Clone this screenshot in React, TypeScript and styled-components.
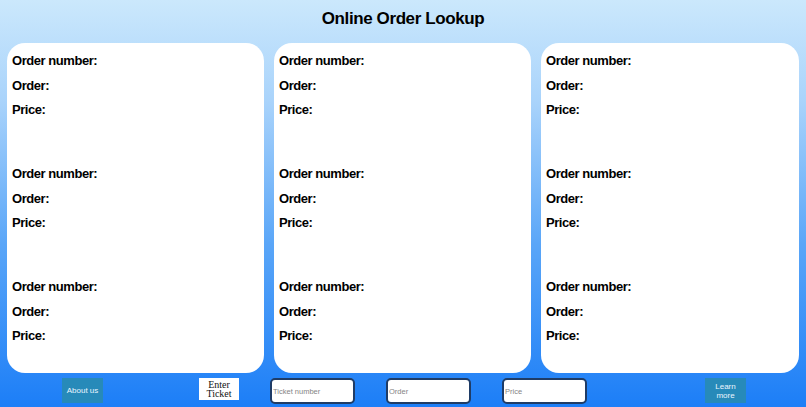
import styled, { createGlobalStyle } from "styled-components";

const GlobalStyle = createGlobalStyle`
  html, body {
    margin: 0;
    padding: 0;
  }
  body {
    font-family: "Liberation Sans", Arial, sans-serif;
  }
`;

const orders = [0, 1, 2];
const columns = [0, 1, 2];

export default function App() {
  return (
    <Page>
      <GlobalStyle />
      <Title>Online Order Lookup</Title>
      <CardRow>
        {columns.map((c) => (
          <Card key={c}>
            {orders.map((o) => (
              <OrderGroup key={o}>
                <Label>Order number:</Label>
                <Label>Order:</Label>
                <Label>Price:</Label>
              </OrderGroup>
            ))}
          </Card>
        ))}
      </CardRow>
      <Footer>
        <NavButton $offset={62}>About us</NavButton>
        <EnterButton $offset={96}>
          Enter
          <br />
          Ticket
        </EnterButton>
        <Field $offset={31} placeholder="Ticket number" />
        <Field $offset={31} placeholder="Order" />
        <Field $offset={31} placeholder="Price" />
        <NavButton $offset={118}>
          Learn
          <br />
          more
        </NavButton>
      </Footer>
    </Page>
  );
}

const Page = styled.div`
  width: 806px;
  height: 407px;
  box-sizing: border-box;
  padding: 0 7px;
  overflow: hidden;
  background: linear-gradient(#cbe8fc 0%, #a9d3fb 25%, #5aa6f8 60%, #1c7ef7 100%);
  display: flex;
  flex-direction: column;
`;

const Title = styled.h1`
  margin: 0;
  height: 43px;
  display: flex;
  align-items: center;
  justify-content: center;
  padding-bottom: 6px;
  box-sizing: border-box;
  font-size: 17px;
  letter-spacing: -0.4px;
  font-weight: 700;
  color: #000;
`;

const CardRow = styled.div`
  display: grid;
  grid-template-columns: 257px 257px 258px;
  gap: 10px;
  height: 330px;
`;

const Card = styled.div`
  background: #fff;
  border-radius: 18px;
  padding: 6px 5px 0;
  display: flex;
  flex-direction: column;
  gap: 39.5px;
`;

const OrderGroup = styled.div`
  display: flex;
  flex-direction: column;
`;

const Label = styled.div`
  height: 24.5px;
  line-height: 24px;
  font-size: 13px;
  font-weight: 700;
  letter-spacing: -0.45px;
  color: #000;
`;

const Footer = styled.div`
  display: flex;
  align-items: flex-start;
  padding-top: 5px;
  margin-left: -7px;
`;

const NavButton = styled.button<{ $offset: number }>`
  margin-left: ${(p) => p.$offset}px;
  width: 41px;
  height: 25px;
  padding: 0;
  border: none;
  background: #278ab9;
  color: #eaf5ff;
  font-family: "Liberation Sans", Arial, sans-serif;
  font-size: 8px;
  line-height: 9px;
`;

const EnterButton = styled.button<{ $offset: number }>`
  margin-left: ${(p) => p.$offset}px;
  width: 40px;
  height: 22px;
  padding: 0;
  border: none;
  background: #fff;
  color: #111;
  font-family: "Liberation Serif", "Times New Roman", serif;
  font-size: 10px;
  line-height: 9.5px;
`;

const Field = styled.input<{ $offset: number }>`
  margin-left: ${(p) => p.$offset}px;
  width: 85px;
  height: 26px;
  box-sizing: border-box;
  border: 2px solid #1f3c66;
  border-radius: 5px;
  background: #fff;
  padding: 0 1px;
  font-family: "Liberation Sans", Arial, sans-serif;
  font-size: 7.5px;
  outline: none;

  &::placeholder {
    color: #858585;
  }
`;
